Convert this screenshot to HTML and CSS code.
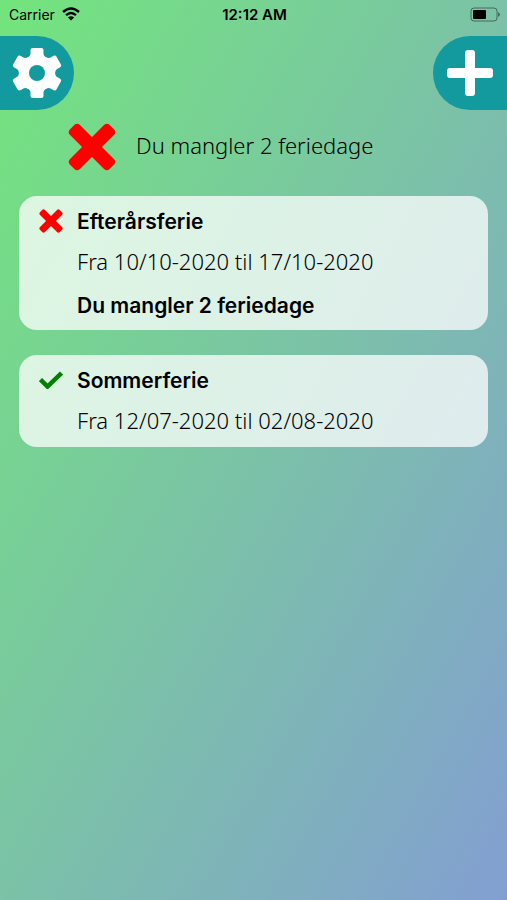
FILE: index.html
```html
<!DOCTYPE html>
<html lang="da">
<head>
<meta charset="utf-8">
<meta name="viewport" content="width=device-width, initial-scale=1">
<title>Feriedage</title>
<link rel="stylesheet" href="styles.css">
</head>
<body>
<svg class="symbols" aria-hidden="true">
  <symbol id="cross" viewBox="0 0 48 48">
    <g fill="currentColor">
      <rect x="-4" y="17" width="56" height="14" rx="4" transform="rotate(45 24 24)"/>
      <rect x="-4" y="17" width="56" height="14" rx="4" transform="rotate(-45 24 24)"/>
    </g>
  </symbol>
</svg>
<div class="status">
  <span class="carrier">Carrier
    <svg width="18" height="14" viewBox="0 0 18 14" aria-hidden="true">
      <path d="M1 5Q9-2 17 5M4 8.200Q9 3.800 14 8.200" fill="none" stroke="#000" stroke-width="2.400"/>
      <path d="M9 13.600 5.900 10.500Q9 8 12.100 10.500Z"/>
    </svg>
  </span>
  <span class="clock">12:12 AM</span>
  <svg class="battery" width="30" height="15" viewBox="0 0 30 15" aria-hidden="true">
    <rect x="1" y="1" width="26" height="13" rx="3" fill="none" stroke="#000" stroke-opacity=".45"/>
    <rect x="3" y="3" width="13" height="9" rx="1"/>
    <path d="M28 5Q32 7.500 28 10Z" fill-opacity=".45"/>
  </svg>
</div>
<header class="toolbar">
  <button class="tab tab-left" aria-label="Indstillinger">
    <svg width="50" height="52" viewBox="0 0 50 52" aria-hidden="true">
      <g fill="#fff">
        <circle cx="25" cy="26" r="18"/>
        <path id="tooth" d="M15 11Q18.500 9 18.500 6.500V3Q18.500 1 20.500 1H29.500Q31.500 1 31.500 3V6.500Q31.500 9 35 11Z"/>
        <use href="#tooth" transform="rotate(60 25 26)"/>
        <use href="#tooth" transform="rotate(120 25 26)"/>
        <use href="#tooth" transform="rotate(180 25 26)"/>
        <use href="#tooth" transform="rotate(240 25 26)"/>
        <use href="#tooth" transform="rotate(300 25 26)"/>
      </g>
      <circle cx="25" cy="26" r="8" fill="#139a9f"/>
    </svg>
  </button>
  <button class="tab tab-right" aria-label="Tilføj ferie">
    <svg width="46" height="46" viewBox="0 0 46 46" aria-hidden="true">
      <rect x="18" width="10" height="46" rx="3" fill="#fff"/>
      <rect y="18" width="46" height="10" rx="3" fill="#fff"/>
    </svg>
  </button>
</header>
<main>
  <div class="summary">
    <svg class="cross" width="48" height="48" aria-hidden="true"><use href="#cross"/></svg>
    <p class="light">Du mangler 2 feriedage</p>
  </div>
  <section class="card">
    <svg class="mark cross" width="24" height="24" aria-hidden="true"><use href="#cross"/></svg>
    <h2>Efterårsferie</h2>
    <p class="light">Fra 10/10-2020 til 17/10-2020</p>
    <p class="strong">Du mangler 2 feriedage</p>
  </section>
  <section class="card">
    <svg class="mark" width="24" height="18" viewBox="0 0 24 18" aria-hidden="true">
      <path d="M1.500 8.500 8.500 15.500 22.500 2" fill="none" stroke="#008000" stroke-width="4.500"/>
    </svg>
    <h2>Sommerferie</h2>
    <p class="light">Fra 12/07-2020 til 02/08-2020</p>
  </section>
</main>
</body>
</html>
```
FILE: styles.css
```css
* {
  box-sizing: border-box;
}

body {
  margin: 0;
  min-height: 100vh;
  background: linear-gradient(to bottom right, #73e57c, #839fd2);
  color: #000;
  font-family: Inter, "Liberation Sans", sans-serif;
}

h2,
p {
  margin: 0;
}

svg {
  display: block;
}

.symbols {
  width: 0;
  height: 0;
  position: absolute;
}

.status {
  display: grid;
  grid-template-columns: 1fr auto 1fr;
  align-items: center;
  height: 28px;
  padding: 0 7px 0 9px;
  font-size: 14px;
}

.carrier {
  display: flex;
  align-items: center;
  gap: 7px;
}

.clock {
  font-size: 15px;
  font-weight: 600;
}

.battery {
  justify-self: end;
}

.toolbar {
  display: flex;
  justify-content: space-between;
  padding-top: 8px;
}

.tab {
  display: flex;
  align-items: center;
  justify-content: center;
  width: 74px;
  height: 74px;
  padding: 0;
  border: 0;
  background: #139a9f;
}

.tab-left {
  border-radius: 0 37px 37px 0;
}

.tab-right {
  border-radius: 37px 0 0 37px;
}

.summary {
  display: flex;
  align-items: center;
  gap: 20px;
  height: 74px;
  margin-bottom: 12px;
  padding-left: 68px;
}

.cross {
  color: #f00;
}

.light {
  padding-bottom: 4px;
  font-family: "Noto Sans", "Open Sans", sans-serif;
  font-weight: 300;
  font-size: 22px;
}

.card {
  display: grid;
  grid-template-columns: 38px 1fr;
  grid-auto-rows: 42px;
  align-items: center;
  margin: 0 19px 25px;
  padding: 4px 20px;
  border-radius: 18px;
  background: rgba(255, 255, 255, 0.75);
}

.card h2,
.card p {
  grid-column: 2;
}

.card h2,
.strong {
  font-size: 21px;
  font-weight: 600;
}
```
